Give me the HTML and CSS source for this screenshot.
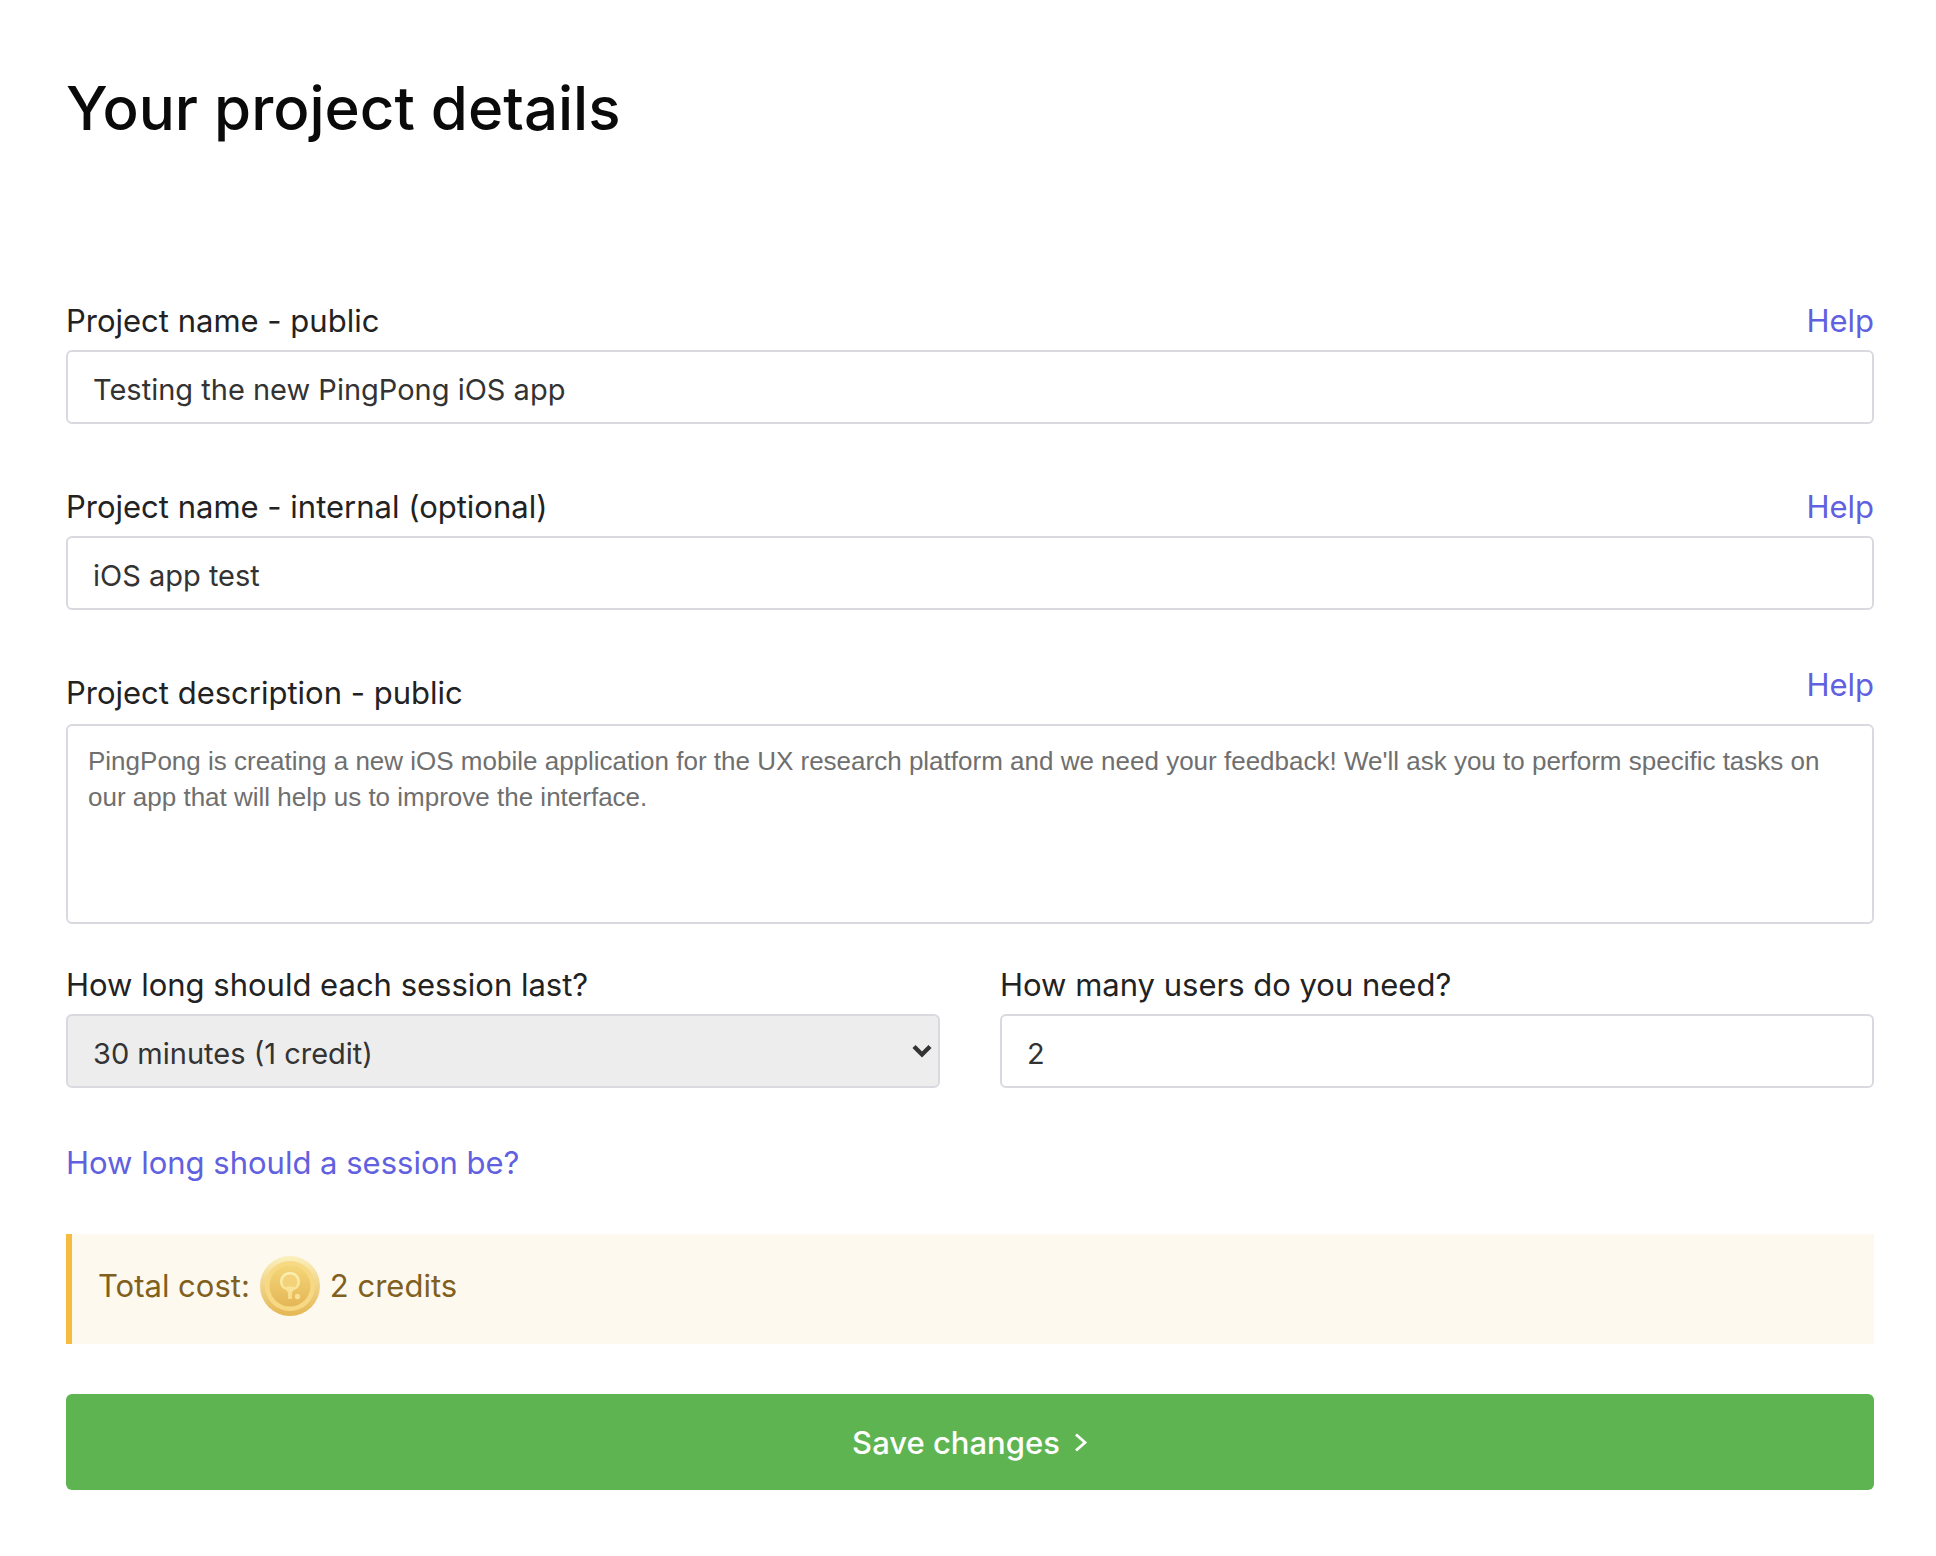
FILE: index.html
```html
<!DOCTYPE html>
<html lang="en">
<head>
  <meta charset="UTF-8" />
  <meta name="viewport" content="width=device-width, initial-scale=1" />
  <title>Your project details</title>
  <link rel="stylesheet" href="styles.css">
</head>
<body>
  <main class="container">
    <h1>Your project details</h1>

    <form id="projectForm">
      <div class="field">
        <div class="field-head">
          <label for="publicName">Project name - public</label>
          <a href="#">Help</a>
        </div>
        <input type="text" id="publicName" class="control" value="Testing the new PingPong iOS app" />
      </div>

      <div class="field">
        <div class="field-head">
          <label for="internalName">Project name - internal (optional)</label>
          <a href="#">Help</a>
        </div>
        <input type="text" id="internalName" class="control" value="iOS app test" />
      </div>

      <div class="field field-description">
        <div class="field-head">
          <label for="description">Project description - public</label>
          <a href="#">Help</a>
        </div>
        <textarea id="description" class="control" spellcheck="false">PingPong is creating a new iOS mobile application for the UX research platform and we need your feedback! We'll ask you to perform specific tasks on our app that will help us to improve the interface.</textarea>
      </div>

      <div class="columns">
        <div class="field">
          <div class="field-head">
            <label for="duration">How long should each session last?</label>
          </div>
          <div class="select-wrap">
            <select id="duration" class="control">
              <option>30 minutes (1 credit)</option>
              <option>60 minutes (2 credits)</option>
            </select>
            <svg class="arrow" width="20" height="14" viewBox="0 0 20 14" aria-hidden="true">
              <path d="M2 2.5l8 8 8-8" fill="none" stroke="#333" stroke-width="4.4" />
            </svg>
          </div>
        </div>
        <div class="field">
          <div class="field-head">
            <label for="users">How many users do you need?</label>
          </div>
          <input type="text" inputmode="numeric" id="users" class="control" value="2" />
        </div>
      </div>

      <a href="#" class="session-link">How long should a session be?</a>

      <div class="cost">
        <span>Total cost:</span>
        <svg class="coin" width="60" height="60" viewBox="0 0 60 60" aria-hidden="true">
          <defs>
            <linearGradient id="rim" x1="0" y1="0" x2="0" y2="1">
              <stop offset="0" stop-color="#fbf0bd" />
              <stop offset="1" stop-color="#e5b653" />
            </linearGradient>
            <linearGradient id="face" x1="0" y1="0" x2="0" y2="1">
              <stop offset="0" stop-color="#f4d679" />
              <stop offset="1" stop-color="#e4b657" />
            </linearGradient>
            <linearGradient id="paddle" x1="0" y1="0" x2="0" y2="1">
              <stop offset="0" stop-color="#fcf0b6" />
              <stop offset="1" stop-color="#f7db84" />
            </linearGradient>
          </defs>
          <circle cx="30" cy="30" r="30" fill="url(#rim)" />
          <circle cx="30" cy="30" r="25" fill="#f6d982" />
          <circle cx="30" cy="30" r="20.5" fill="url(#face)" />
          <circle cx="30" cy="26" r="8.5" fill="#f3d27a" />
          <path fill="url(#paddle)" fill-rule="evenodd" d="M30 16c-5.7 0-10 4.200-10 9.700 0 3.600 1.700 6.400 4.700 7.800 2.200 1.100 3.300 2.100 3.300 4V43h4v-5.500c0-1.900 1.100-2.900 3.300-4 3-1.400 4.700-4.200 4.700-7.800 0-5.500-4.300-9.700-10-9.700zm0 2.600c4.300 0 7.300 3 7.300 7.100 0 2.400-.9 4.200-2.500 5.500-3-.8-6.600-.8-9.600 0-1.600-1.300-2.500-3.100-2.500-5.500 0-4.100 3-7.100 7.300-7.100z" />
          <circle cx="37.500" cy="40.500" r="2.700" fill="#f9e092" />
        </svg>
        <span>2 credits</span>
      </div>

      <button type="submit">
        Save changes
        <svg width="14" height="20" viewBox="0 0 14 20" aria-hidden="true">
          <path d="M2 2.500l9 8-9 8" fill="none" stroke="#fff" stroke-width="2.800" />
        </svg>
      </button>
    </form>
  </main>
</body>
</html>
```
FILE: styles.css
```css
* {
  box-sizing: border-box;
}
body {
  margin: 0;
  background: #fff;
  color: #222;
  font-family: Inter, 'Liberation Sans', sans-serif;
  font-size: 31px;
  line-height: 50px;
}
.container {
  padding: 72px 62px 66px 66px;
}
h1 {
  margin: 0 0 152px;
  color: #0a0a0a;
  font-size: 60px;
  font-weight: 500;
  line-height: 72px;
}
a {
  color: #6060e0;
  text-decoration: none;
}
a:hover {
  text-decoration: underline;
}
.field {
  margin-bottom: 58px;
}
.field-head {
  display: flex;
  justify-content: space-between;
  margin-bottom: 4px;
}
.control {
  display: block;
  width: 100%;
  height: 74px;
  padding: 4px 25px 0;
  border: 2px solid #d9d9e0;
  border-radius: 6px;
  background: #fff;
  color: #333;
  font-family: inherit;
  font-size: 29px;
}
.control:focus {
  outline: none;
  border-color: #6060e0;
}
/* help link sits a little above the label here */
.field-description {
  margin: -8px 0 36px;
}
.field-description .field-head {
  height: 58px;
  margin-bottom: 6px;
}
.field-description label {
  align-self: flex-end;
}
textarea.control {
  height: 200px;
  padding: 17px 20px;
  color: #6f6f6f;
  font-family: 'Liberation Sans', Arial, sans-serif;
  font-size: 26px;
  line-height: 36px;
  resize: none;
}
.columns {
  display: grid;
  grid-template-columns: 1fr 1fr;
  gap: 60px;
}
.columns .field {
  margin-bottom: 50px;
}
.select-wrap {
  position: relative;
}
select.control {
  appearance: none;
  background: #ededed;
}
.arrow {
  position: absolute;
  top: 30px;
  right: 8px;
  pointer-events: none;
}
.session-link {
  display: table;
}
.cost {
  display: flex;
  align-items: center;
  gap: 10px;
  height: 110px;
  margin: 46px 0 50px;
  padding: 0 26px 6px;
  border-left: 6px solid #f6bc42;
  background: #fef9ee;
  color: #80601e;
}
button {
  display: flex;
  align-items: center;
  justify-content: center;
  gap: 14px;
  width: 100%;
  height: 96px;
  border: none;
  border-radius: 6px;
  background: #5fb452;
  color: #fff;
  font-family: inherit;
  font-size: 31px;
  font-weight: 500;
  cursor: pointer;
}
button:hover {
  background: #54a548;
}
```
